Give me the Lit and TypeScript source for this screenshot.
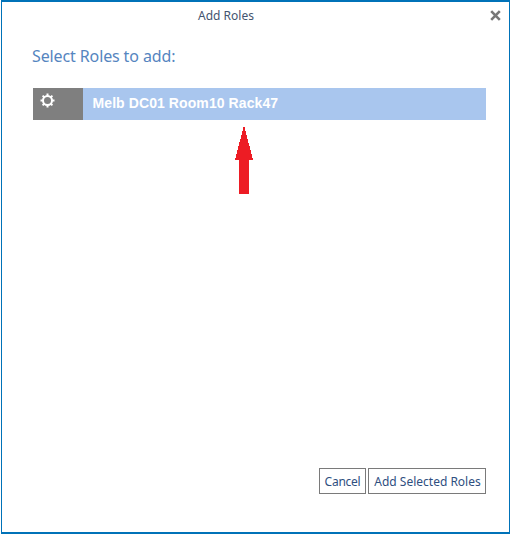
import { css, html, LitElement } from "lit";
import { customElement } from "lit/decorators.js";

@customElement("app-root")
export class AppRoot extends LitElement {
  static override styles = css`
    :host {
      display: block;
      width: 511px;
      height: 534px;
      background: #fff;
      padding: 0 1px;
      box-sizing: border-box;
      font-family: "Noto Sans", "Open Sans", sans-serif;
    }
    .dialog {
      height: 100%;
      box-sizing: border-box;
      border: 1px solid #0072b8;
      border-width: 2px 1px 2px 1px;
      display: flex;
      flex-direction: column;
      padding: 0 23px 38px 31px;
    }
    .header {
      display: flex;
      height: 29px;
      margin-right: -15px;
    }
    .title {
      flex: 1;
      text-align: center;
      font-size: 12px;
      line-height: 28px;
      color: #44546f;
      padding-right: 71px;
    }
    .close {
      width: 11px;
      height: 11px;
      display: block;
      margin-top: 8px;
    }
    h2 {
      margin: 0 0 0 -1px;
      padding-top: 13px;
      font-size: 16px;
      line-height: 24px;
      font-weight: 400;
      letter-spacing: -0.12px;
      color: #5585c0;
    }
    .role {
      display: flex;
      height: 32px;
      margin-top: 20px;
      background: #a9c6ee;
    }
    .icon {
      width: 50px;
      background: #7f7f7f;
      padding: 4px 0 0 6px;
      box-sizing: border-box;
    }
    .icon svg {
      display: block;
    }
    .name {
      padding-left: 9.5px;
      line-height: 30px;
      font-family: "Liberation Sans", Arial, sans-serif;
      font-size: 14px;
      font-weight: 700;
      letter-spacing: 0.09px;
      color: #fff;
    }
    .arrow {
      display: block;
      margin: 5px 0 0 201px;
      shape-rendering: crispEdges;
    }
    .footer {
      margin-top: auto;
      display: flex;
      justify-content: flex-end;
      gap: 2px;
    }
    button {
      height: 26px;
      padding: 0;
      background: #fff;
      border: 1px solid #7a7a7a;
      font-family: inherit;
      font-size: 12px;
      color: #2f4f7f;
    }
    .cancel {
      width: 47px;
      letter-spacing: -0.25px;
    }
    .add {
      width: 118px;
      padding-left: 1px;
    }
  `;

  override render() {
    return html`
      <div class="dialog">
        <div class="header">
          <div class="title">Add Roles</div>
          <svg class="close" viewBox="0 0 11 11">
            <path d="M1.2 1.2 9.8 9.8M9.8 1.2 1.2 9.8" stroke="#777" stroke-width="2.6" />
          </svg>
        </div>
        <h2>Select Roles to add:</h2>
        <div class="role">
          <div class="icon">
            <svg width="17" height="17" viewBox="0 0 17 17">
              <circle cx="8.5" cy="8.5" r="4.5" fill="none" stroke="#fff" stroke-width="2" />
              <path
                d="M8.5 1.5v3M8.5 12.5v3M1.5 8.5h3M12.5 8.5h3M3.6 3.6l2 2M11.4 11.4l2 2M13.4 3.6l-2 2M5.6 11.4l-2 2"
                stroke="#fff"
                stroke-width="2"
              />
            </svg>
          </div>
          <div class="name">Melb DC01 Room10 Rack47</div>
        </div>
        <svg class="arrow" width="20" height="69" viewBox="0 0 20 69">
          <path d="M10 0 19 35H15V69H5V35H1Z" fill="#ed1c24" />
        </svg>
        <div class="footer">
          <button class="cancel">Cancel</button>
          <button class="add">Add Selected Roles</button>
        </div>
      </div>
    `;
  }
}
